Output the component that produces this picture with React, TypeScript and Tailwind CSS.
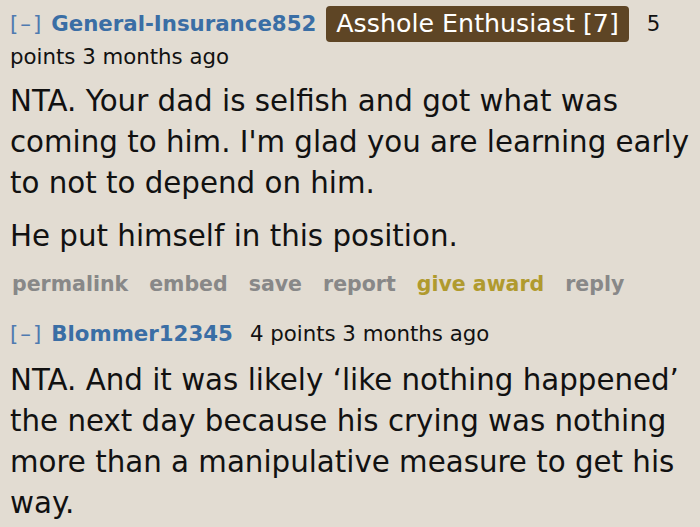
import React from 'react';

const font = { fontFamily: '"DejaVu Sans", Tahoma, Verdana, sans-serif' };

function Actions() {
  return (
    <div className="flex gap-[21px] text-[20.5px] font-bold text-[#888888] mt-[12px] ml-[2px]">
      <span>permalink</span>
      <span>embed</span>
      <span>save</span>
      <span>report</span>
      <span className="text-[#b09a2e]">give award</span>
      <span>reply</span>
    </div>
  );
}

export default function App() {
  return (
    <div className="w-[700px] h-[527px] overflow-hidden bg-[#e2dcd2] text-[#111111] pl-[10px] pr-[2px] pt-[6px]" style={font}>
      {/* first comment */}
      <div className="text-[21.3px] leading-[36px]">
        <span className="text-[#4f7ab0] mr-[8px] tracking-[2px]">[–]</span>
        <span className="font-bold text-[#3a6ea5]">General-Insurance852</span>
        <span className="inline-block bg-[#5e4525] text-white text-[25.3px] leading-[36px] px-[10px] rounded-[4px] ml-[10px] align-top">
          Asshole Enthusiast [7]
        </span>
        <span className="ml-[18px]">5</span>
        <div className="leading-[26px] mt-[2px]">points 3 months ago</div>
      </div>
      <div className="text-[29.3px] leading-[41px] mt-[11px]">
        <p>NTA. Your dad is selfish and got what was coming to him. I'm glad you are learning early to not to depend on him.</p>
        <p className="mt-[12px]">He put himself in this position.</p>
      </div>
      <Actions />

      {/* second comment */}
      <div className="text-[21.3px] leading-[30px] mt-[19px] flex items-baseline">
        <span className="text-[#4f7ab0] mr-[8px] tracking-[2px]">[–]</span>
        <span className="font-bold text-[#3a6ea5] mr-[17px]">Blommer12345</span>
        <span>4 points 3 months ago</span>
      </div>
      <div className="text-[29.3px] leading-[41px] mt-[11px]">
        <p>NTA. And it was likely ‘like nothing happened’ the next day because his crying was nothing more than a manipulative measure to get his way.</p>
      </div>
    </div>
  );
}
